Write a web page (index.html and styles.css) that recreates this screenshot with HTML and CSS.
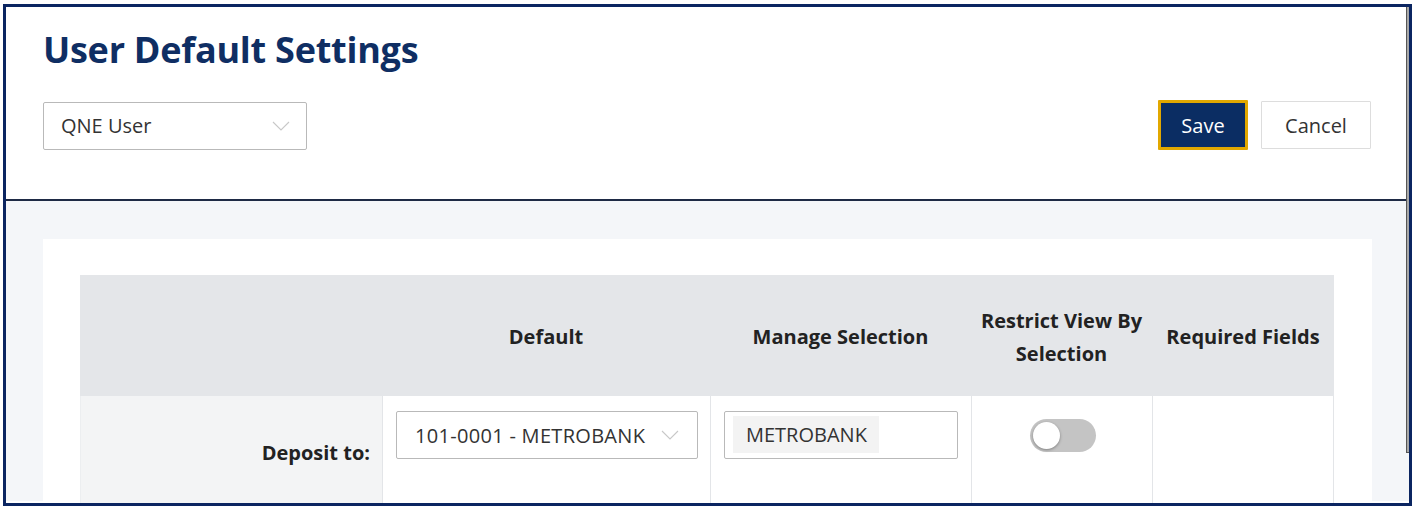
FILE: index.html
```html
<!DOCTYPE html>
<html>
<head>
<meta charset="utf-8">
<link rel="stylesheet" href="styles.css">
</head>
<body>
<div class="frame">
  <div class="scrollbar"></div>
  <header class="header">
    <h1 class="title">User Default Settings</h1>
    <div class="toolbar">
      <div class="select user-select">
        <span class="select-text">QNE User</span>
        <svg class="chev" width="18" height="10" viewBox="0 0 18 10"><path d="M1 1 L9 9 L17 1" fill="none" stroke="#c8c8c8" stroke-width="1.1"/></svg>
      </div>
      <div class="actions">
        <button class="btn btn-primary">Save</button>
        <button class="btn btn-default">Cancel</button>
      </div>
    </div>
  </header>
  <main class="content">
    <section class="card">
      <div class="grid">
        <div class="th"></div>
        <div class="th">Default</div>
        <div class="th">Manage Selection</div>
        <div class="th">Restrict View By<br>Selection</div>
        <div class="th">Required Fields</div>

        <div class="td label-cell"><span class="label">Deposit to:</span></div>
        <div class="td">
          <div class="select acct-select">
            <span class="select-text acct-text">101-0001 - METROBANK</span>
            <svg class="chev" width="18" height="10" viewBox="0 0 18 10"><path d="M1 1 L9 9 L17 1" fill="none" stroke="#c8c8c8" stroke-width="1.1"/></svg>
          </div>
        </div>
        <div class="td">
          <div class="tag-input"><span class="tag">METROBANK</span></div>
        </div>
        <div class="td center">
          <span class="toggle"><span class="knob"></span></span>
        </div>
        <div class="td"></div>
      </div>
    </section>
  </main>
</div>
</body>
</html>
```
FILE: styles.css
```css
* { box-sizing: border-box; }
html, body { margin: 0; padding: 0; background: #ffffff; }
body {
  font-family: "Open Sans", "Noto Sans", sans-serif;
  color: #222;
  width: 1415px;
  height: 510px;
  overflow: hidden;
}
.frame {
  position: relative;
  margin: 4px 0 0 3px;
  width: 1409px;
  height: 502px;
  border: 3px solid #0b2561;
  overflow: hidden;
  background: #fff;
}
.scrollbar {
  position: absolute;
  top: 0;
  right: 0;
  width: 3px;
  height: 446px;
  border-left: 1px solid #555;
  border-bottom: 1px solid #555;
  background: #a8a8a8;
  z-index: 5;
}
.header {
  height: 194px;
  border-bottom: 2px solid #1e2a45;
  padding: 0 38px 0 37px;
  background: #fff;
}
.title {
  margin: 0;
  padding-top: 19px;
  font-size: 36px;
  line-height: 48px;
  font-weight: 700;
  color: #0f2e63;
  letter-spacing: -0.25px;
}
.toolbar {
  display: flex;
  justify-content: space-between;
  align-items: center;
  margin-top: 27px;
}
.select {
  display: flex;
  align-items: center;
  justify-content: space-between;
  height: 48px;
  border: 1px solid #b9b9b9;
  border-radius: 2px;
  background: #fff;
  font-size: 20px;
  color: #333;
}
.user-select { width: 264px; padding: 0 16px 0 17px; }
.acct-select { width: 302px; padding: 0 18px 0 18px; }
.acct-text { letter-spacing: 0.3px; }
.chev { display: block; }
.actions { display: flex; gap: 13px; }
.btn {
  font-family: inherit;
  font-size: 20px;
  height: 48px;
  border-radius: 1px;
  cursor: pointer;
  padding-top: 2px;
}
.btn-primary {
  width: 90px;
  background: #0b2d63;
  color: #fff;
  border: 3px solid #e2a800;
  height: 50px;
  margin-top: -1px;
}
.btn-default {
  width: 110px;
  background: #fff;
  color: #333;
  border: 1px solid #ddd;
}
.content {
  background: #f4f6f9;
  padding: 38px 37px 0 37px;
  height: 300px;
}
.card {
  background: #fff;
  padding: 36px 36px 0 37px;
  height: 300px;
}
.grid {
  display: grid;
  grid-template-columns: 302px 328px 261px 181px 182px;
  grid-template-rows: 121px 114px;
}
.th {
  background: #e4e6e9;
  display: flex;
  align-items: center;
  justify-content: center;
  text-align: center;
  font-weight: 700;
  font-size: 20px;
  line-height: 33px;
  color: #222;
  padding-top: 2px;
}
.td {
  border-left: 1px solid #e3e5e8;
  padding: 15px 13px 0 13px;
}
.td:last-child { border-right: 1px solid #e3e5e8; }
.label-cell {
  background: #f3f4f5;
  border-left: 1px solid #eceef0;
  display: flex;
  justify-content: flex-end;
  padding: 43px 12px 0 0;
}
.label {
  font-weight: 700;
  font-size: 20px;
  color: #222;
}
.tag-input {
  height: 48px;
  border: 1px solid #b9b9b9;
  border-radius: 2px;
  padding: 4px 8px;
}
.tag {
  display: inline-block;
  height: 37px;
  line-height: 37px;
  padding: 0 12px 0 13px;
  background: #f3f3f3;
  font-size: 20px;
  color: #333;
}
.center { display: flex; justify-content: center; padding-top: 23px; }
.toggle {
  position: relative;
  display: block;
  width: 66px;
  height: 33px;
  border-radius: 17px;
  background: #c4c4c4;
  margin-left: 2px;
}
.knob {
  position: absolute;
  left: 3px;
  top: 3px;
  width: 27px;
  height: 27px;
  border-radius: 50%;
  background: #fff;
  box-shadow: 0 1px 3px rgba(0,0,0,0.35);
}
```
